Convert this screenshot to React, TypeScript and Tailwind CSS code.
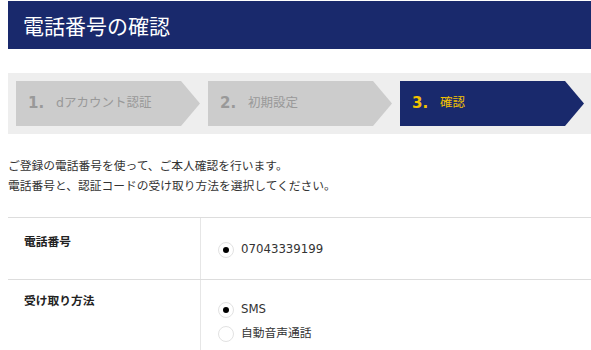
import React from "react";

const font = "font-['DejaVu_Sans','Noto_Sans_CJK_JP',sans-serif]";

const steps = [
  { no: "1.", label: "dアカウント認証", active: false },
  { no: "2.", label: "初期設定", active: false },
  { no: "3.", label: "確認", active: true },
];

function Radio({ checked, label }: { checked: boolean; label: string }) {
  return (
    <label className="flex h-[16px] items-center gap-[7px]">
      <span className="flex h-[16px] w-[16px] items-center justify-center rounded-full border border-[#e2e2e2] bg-white">
        {checked && <span className="h-[6px] w-[6px] rounded-full bg-black" />}
      </span>
      <span className="text-[11.75px] text-[#333]">{label}</span>
    </label>
  );
}

export default function App() {
  return (
    <div className={`h-[350px] w-[591px] overflow-hidden bg-white pl-[8px] ${font}`}>
      <div className="mt-[1px] flex h-[48px] items-center bg-[#19296c] pl-[15px]">
        <h1 className="font-['Noto_Sans_CJK_JP',sans-serif] text-[21px] leading-none text-white">
          電話番号の確認
        </h1>
      </div>

      <div className="mt-[24px] flex h-[61px] gap-[8px] bg-[#eeeeee] p-[8px]">
        {steps.map((s) => (
          <div
            key={s.no}
            className={`flex h-[45px] w-[184px] shrink-0 items-center pl-[12px] [clip-path:polygon(0_0,calc(100%_-_19px)_0,100%_50%,calc(100%_-_19px)_100%,0_100%)] ${
              s.active ? "bg-[#19296c] text-[#f2c200]" : "bg-[#cccccc] text-[#999999]"
            }`}
          >
            <span className="w-[28px] text-[15px] font-bold">{s.no}</span>
            <span className="text-[12.5px]">{s.label}</span>
          </div>
        ))}
      </div>

      <div className="mt-[22px] text-[11.75px] leading-[20px] text-[#333]">
        <p>ご登録の電話番号を使って、ご本人確認を行います。</p>
        <p>電話番号と、認証コードの受け取り方法を選択してください。</p>
      </div>

      <div className="mt-[21px] border-t border-[#dddddd]">
        <div className="flex border-b border-[#dddddd]">
          <div className="w-[193px] shrink-0 border-r border-[#e6e6e6] pl-[16px] pt-[16px] text-[11.75px] font-bold leading-[16px] text-[#222]">
            電話番号
          </div>
          <div className="pb-[21px] pl-[17px] pt-[24px]">
            <Radio checked label="07043339199" />
          </div>
        </div>
        <div className="flex">
          <div className="w-[193px] shrink-0 border-r border-[#e6e6e6] pl-[16px] pt-[13px] text-[11.75px] font-bold leading-[16px] text-[#222]">
            受け取り方法
          </div>
          <div className="flex flex-col gap-[8px] py-[22px] pl-[17px]">
            <Radio checked label="SMS" />
            <Radio checked={false} label="自動音声通話" />
          </div>
        </div>
      </div>
    </div>
  );
}
